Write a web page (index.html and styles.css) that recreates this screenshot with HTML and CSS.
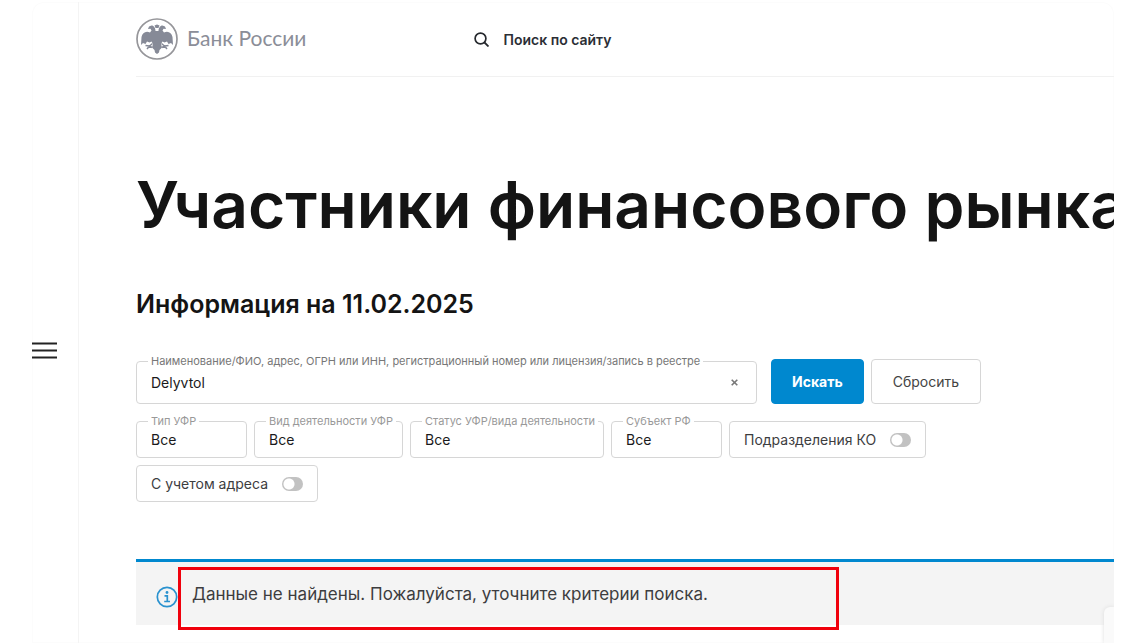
FILE: index.html
```html
<!DOCTYPE html>
<html lang="ru">
<head>
<meta charset="utf-8">
<meta name="viewport" content="width=device-width, initial-scale=1">
<title>Участники финансового рынка</title>
<link rel="stylesheet" href="styles.css">
</head>
<body>
<div class="frame">
  <nav class="rail" aria-label="Разделы">
    <button class="menu" type="button" aria-label="Меню">
      <svg width="25" height="17" viewBox="0 0 25 17" aria-hidden="true"><path d="M0 1.5h25M0 8.5h25M0 15.5h25" stroke="#222" stroke-width="1.8"/></svg>
    </button>
  </nav>
  <div class="page">
    <header class="top">
      <a class="logo" href="#">
        <svg width="42" height="42" viewBox="0 0 42 42" aria-hidden="true">
          <circle cx="21" cy="21" r="20" fill="none" stroke="#96969a" stroke-width="1.7"/>
          <g fill="#868a97">
            <path d="M19.500 13C19.500 10 18 7.500 15.500 7.500L13 8.500 12 11 14.500 10.800 15.500 12.500 14 14.500C9.500 12.500 6.500 15 5.500 19L5 27 7 25 9.500 26 11 23.500 13.500 24.500 15.500 23.500 17 26 16 29.500 18.500 32 19 34.500 21 36 23 34.500 23.500 32 26 29.500 25 26 26.500 23.500 28.500 24.500 31 23.500 32.500 26 35 25 37 27 36.500 19C35.500 15 32.500 12.500 28 14.500L26.500 12.500 27.500 10.800 30 11 29 8.500 26.500 7.500C24 7.500 22.500 10 22.500 13Z"/>
            <path d="M18.500 7.500 21 6.500 23.500 7.500 22.500 10 19.500 10Z"/>
          </g>
          <path d="M9.500 27.500l4 .5 3-2.500M11 31l2.500-3 2.500 1.500M32.500 27.500l-4 .5-3-2.500M31 31l-2.500-3-2.500 1.500" fill="none" stroke="#868a97" stroke-width="1.500"/>
        </svg>
        <span>Банк России</span>
      </a>
      <button class="site-search" type="button">
        <svg width="15" height="15" viewBox="0 0 15 15" aria-hidden="true"><circle cx="6.500" cy="6.500" r="5.400" fill="none" stroke="#26292e" stroke-width="1.700"/><path d="M10.500 10.500l4 4" stroke="#26292e" stroke-width="1.800"/></svg>
        <span>Поиск по сайту</span>
      </button>
    </header>
    <main>
      <h1>Участники финансового рынка</h1>
      <h2>Информация на 11.02.2025</h2>
      <form class="form">
        <div class="row">
          <div class="field field-query">
            <label for="q">Наименование/ФИО, адрес, ОГРН или ИНН, регистрационный номер или лицензия/запись в реестре</label>
            <input id="q" type="text" value="Delyvtol">
            <button class="clear" type="button" aria-label="Очистить">
              <svg width="7" height="7" viewBox="0 0 7 7" aria-hidden="true"><path d="M.7.7l5.600 5.600M6.300.7L.7 6.300" stroke="#777" stroke-width="1.600"/></svg>
            </button>
          </div>
          <div class="actions">
            <button class="btn primary" type="submit">Искать</button>
            <button class="btn" type="reset">Сбросить</button>
          </div>
        </div>
        <div class="filters">
          <div class="field w-s"><label for="type">Тип УФР</label><select id="type"><option>Все</option></select></div>
          <div class="field w-m"><label for="kind">Вид деятельности УФР</label><select id="kind"><option>Все</option></select></div>
          <div class="field w-l"><label for="status">Статус УФР/вида деятельности</label><select id="status"><option>Все</option></select></div>
          <div class="field w-s"><label for="region">Субъект РФ</label><select id="region"><option>Все</option></select></div>
          <label class="toggle">Подразделения КО<input type="checkbox"></label>
          <label class="toggle">С учетом адреса<input type="checkbox"></label>
        </div>
      </form>
      <section class="notice">
        <svg width="22" height="22" viewBox="0 0 22 22" aria-hidden="true"><circle cx="11" cy="11" r="9.700" fill="none" stroke="#2a92cf" stroke-width="1.700"/><circle cx="11" cy="6.500" r="1.400" fill="#2a92cf"/><path d="M8.500 9.800H11.300V15.300M8.200 15.500h5.800" fill="none" stroke="#2a92cf" stroke-width="1.700"/></svg>
        <p>Данные не найдены. Пожалуйста, уточните критерии поиска.</p>
        <div class="mark"></div>
      </section>
    </main>
  </div>
  <div class="corner"></div>
</div>
</body>
</html>
```
FILE: styles.css
```css
* { box-sizing: border-box; }
body {
  margin: 0;
  background: #fff;
  color: #1a1a1c;
  font-family: Inter, "Liberation Sans", sans-serif;
}
button, input, select { font: inherit; color: inherit; margin: 0; }
button { cursor: pointer; }
.frame {
  position: relative;
  display: flex;
  height: calc(100vh - 2px);
  margin: 2px 20px 0 32px;
  border-top-left-radius: 12px;
  border-top-right-radius: 12px;
  box-shadow: inset 0 0 0 1px #fcfcfc;
  overflow: hidden;
}
.rail {
  flex: none;
  width: 47px;
  display: flex;
  align-items: center;
  border-right: 1px solid #f4f4f4;
  padding-top: 55px;
}
.menu { padding: 0; border: 0; background: none; line-height: 0; }
.page { flex: 1; min-width: 0; padding-left: 57px; }
.top {
  display: flex;
  align-items: center;
  gap: 168px;
  height: 75px;
  border-bottom: 1px solid #f1f1f1;
}
.logo {
  display: flex;
  align-items: center;
  gap: 9px;
  color: #8b8e98;
  font-family: Lato, "Noto Sans", sans-serif;
  font-size: 21px;
  line-height: 24px;
  text-decoration: none;
}
.logo span { padding-bottom: 3px; }
.site-search {
  display: flex;
  align-items: center;
  gap: 14px;
  padding: 0;
  border: 0;
  background: none;
  font-size: 14px;
  font-weight: 600;
  color: #2b2e35;
}
h1 {
  margin: 92px 0 0;
  font-size: 64px;
  line-height: 72px;
  font-weight: 600;
  white-space: nowrap;
  color: #141414;
}
h2 {
  margin: 47px 0 0;
  font-size: 25px;
  line-height: 32px;
  font-weight: 600;
  color: #141414;
}
.form { max-width: 845px; margin-top: 39px; }
.row { display: flex; align-items: flex-end; gap: 14px; }
.field {
  position: relative;
  height: 37px;
  border: 1px solid #d6d6d6;
  border-radius: 4px;
}
.field label {
  position: absolute;
  top: -8px;
  left: 11px;
  padding: 0 3px;
  background: #fff;
  font-size: 11px;
  line-height: 14px;
  white-space: nowrap;
  color: #999;
}
.field input, .field select {
  width: 100%;
  height: 100%;
  padding: 0 14px;
  border: 0;
  border-radius: 4px;
  background: none;
  appearance: none;
  font-size: 14px;
}
.field-query { flex: 1; height: 43px; display: flex; align-items: center; }
.field-query label { color: #777; }
.clear { padding: 0 18px; border: 0; background: none; line-height: 0; }
.actions { display: flex; gap: 7px; }
.btn {
  height: 45px;
  padding: 0 21px;
  border: 1px solid #d6d6d6;
  border-radius: 4px;
  background: #fff;
  font-size: 14px;
  color: #444;
}
.primary { padding: 0 20px; border-color: #0088cf; background: #0088cf; color: #fff; font-weight: 700; }
.filters { display: flex; flex-wrap: wrap; gap: 7px; margin-top: 17px; }
.w-s { width: 111px; }
.w-m { width: 149px; }
.w-l { width: 194px; }
.toggle {
  display: flex;
  align-items: center;
  gap: 14px;
  height: 37px;
  padding: 0 14px;
  border: 1px solid #d6d6d6;
  border-radius: 4px;
  font-size: 14px;
  color: #3d3d3f;
}
.toggle input {
  appearance: none;
  width: 21px;
  height: 14px;
  border-radius: 7px;
  background: radial-gradient(circle at 7px 7px, #fff 5px, #c2c2c2 6px);
}
.notice {
  position: relative;
  display: flex;
  gap: 14px;
  margin-top: 57px;
  height: 66px;
  padding: 20px 20px 0;
  border-top: 3px solid #0088cf;
  background: #f4f4f4;
  font-size: 17px;
  color: #3d3d3f;
}
.notice svg { flex: none; margin-top: 4px; }
.notice p { margin: 0; line-height: 24px; }
.mark {
  position: absolute;
  top: 5px;
  left: 42px;
  width: 661px;
  height: 63px;
  border: 3px solid #f0000c;
}
.corner {
  position: absolute;
  right: 0;
  bottom: 0;
  width: 10px;
  height: 36px;
  border-top-left-radius: 6px;
  background: #fafafa;
  box-shadow: 0 0 4px #ddd;
}
```
